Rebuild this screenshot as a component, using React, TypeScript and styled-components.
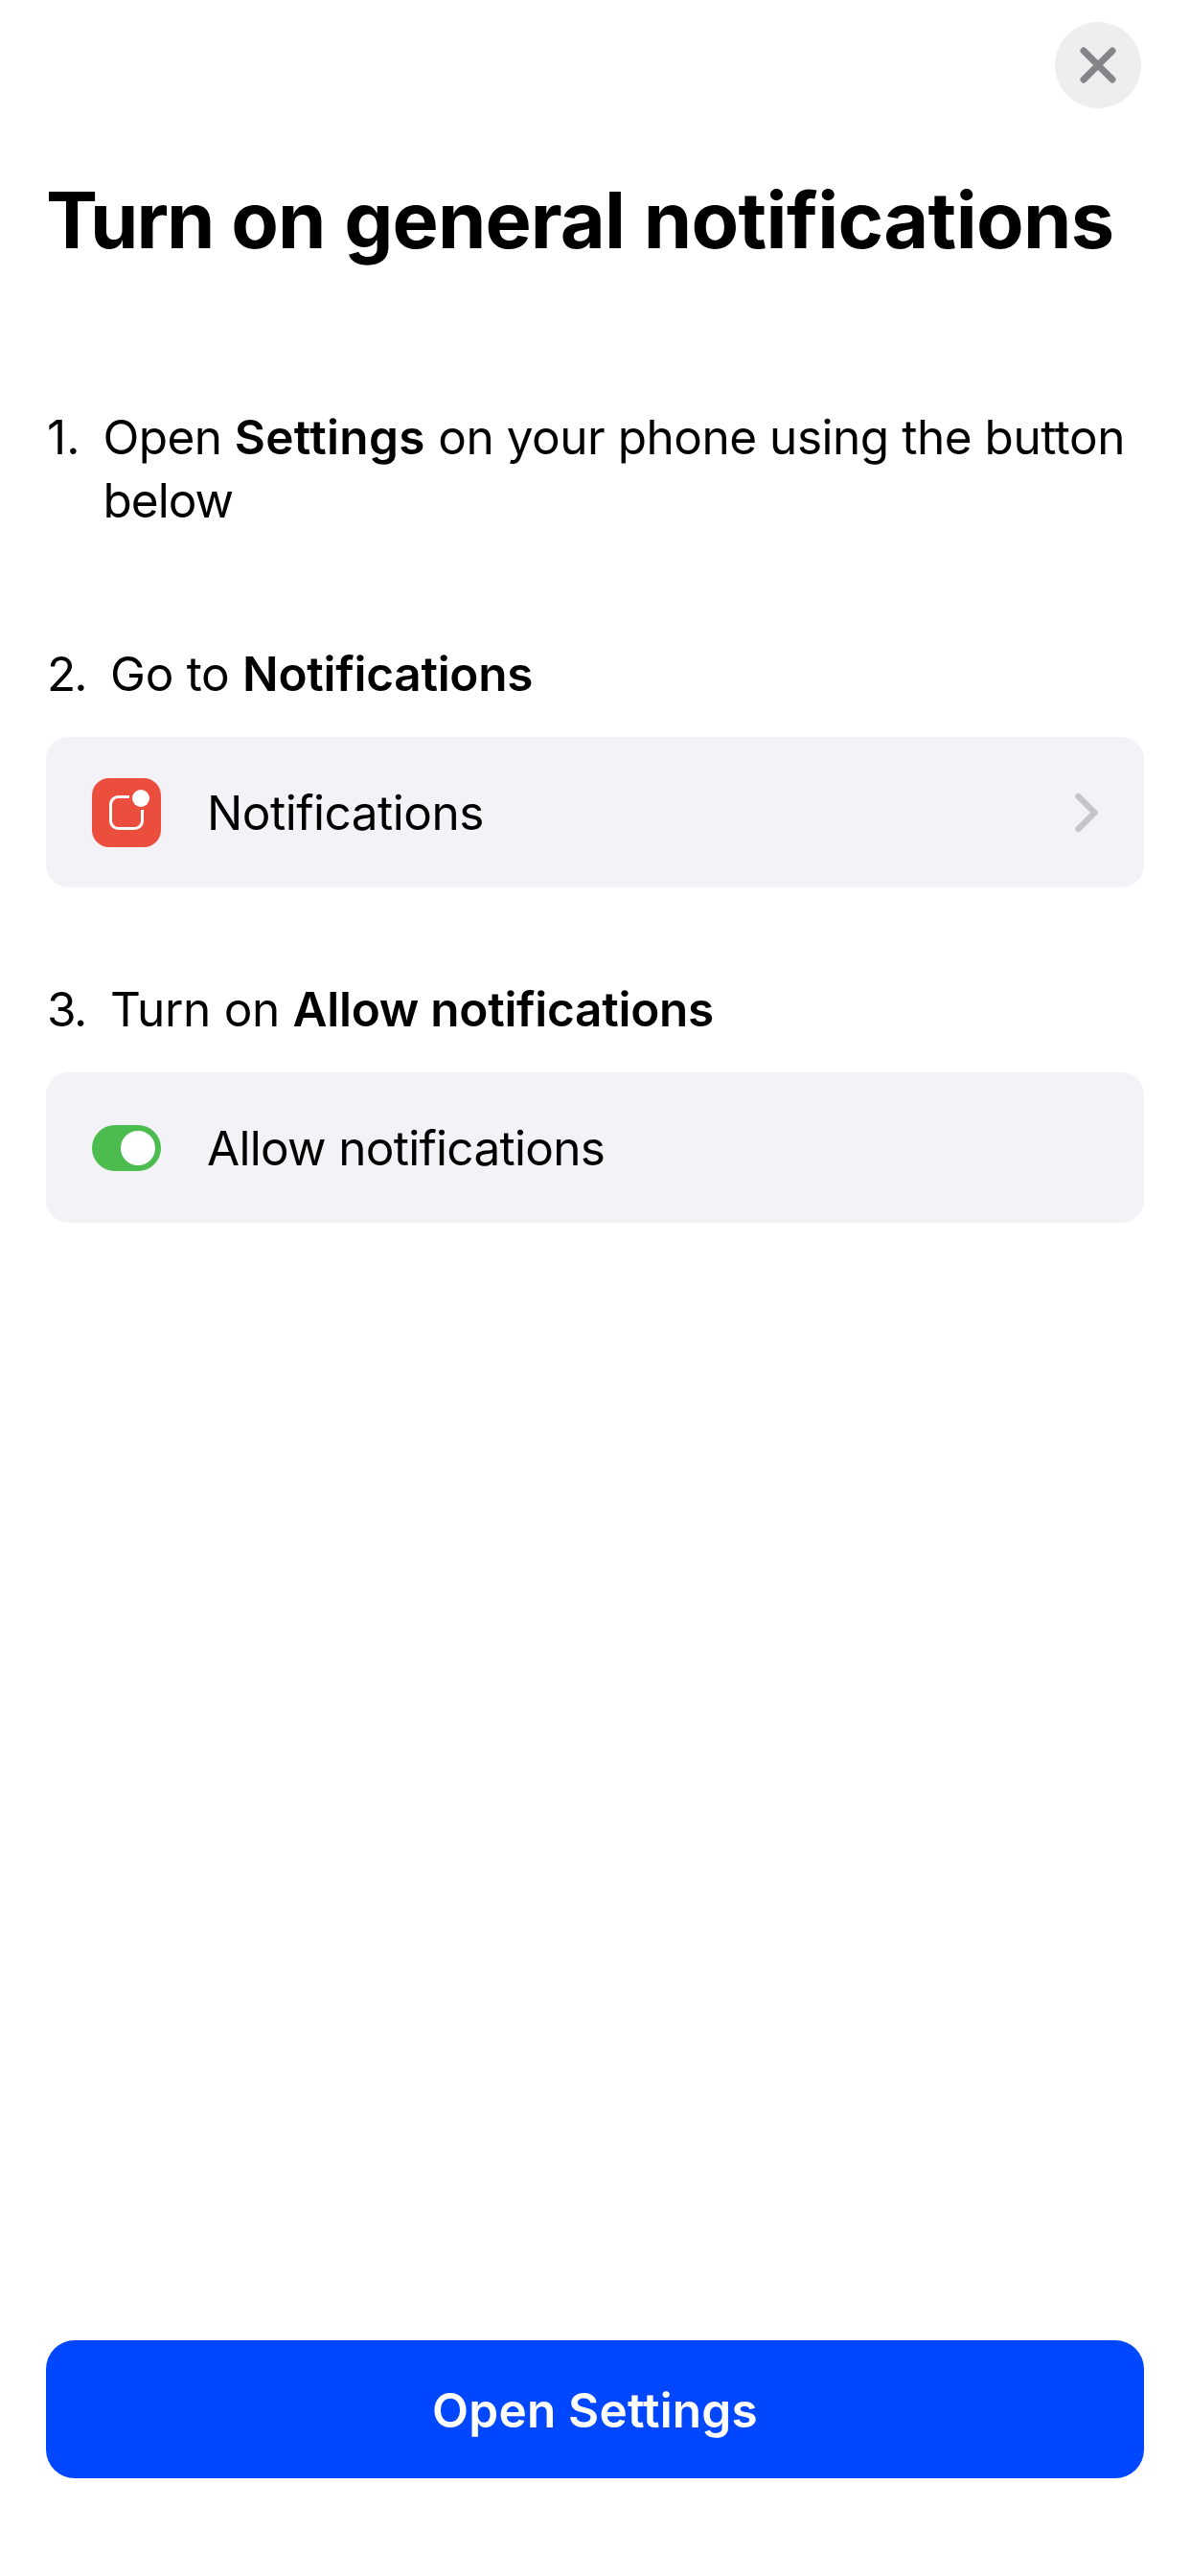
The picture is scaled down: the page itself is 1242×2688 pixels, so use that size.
import React from "react";
import styled, { createGlobalStyle } from "styled-components";

const GlobalStyle = createGlobalStyle`
  *, *::before, *::after { box-sizing: border-box; }
  html, body { margin: 0; padding: 0; background: #ffffff; }
  body { font-family: Inter, "Liberation Sans", sans-serif; color: #000000; }
`;

const Screen = styled.main`
  display: flex;
  flex-direction: column;
  width: 100%;
  min-height: 2688px;
  padding: 23px 48px 102px;
  background: #ffffff;
`;

const Header = styled.header`
  display: flex;
  justify-content: flex-end;
  padding-right: 3px;
`;

const CloseButton = styled.button`
  display: flex;
  align-items: center;
  justify-content: center;
  width: 90px;
  height: 90px;
  padding: 0;
  border: 0;
  border-radius: 50%;
  background: #eeeeee;
`;

const Title = styled.h1`
  margin: 67px 0 0;
  font-size: 81px;
  font-weight: 700;
  line-height: 100px;
  word-spacing: 1.5px;
  white-space: nowrap;
`;

const Steps = styled.ol`
  display: flex;
  flex-direction: column;
  gap: 94px;
  margin: 143px 0 0;
  padding: 0;
  list-style: none;
`;

const Step = styled.li<{ $extraSpace?: number }>`
  display: flex;
  flex-direction: column;
  gap: 33px;
  padding-bottom: ${(p) => p.$extraSpace ?? 0}px;
`;

const StepLine = styled.div<{ $indent: number }>`
  display: grid;
  grid-template-columns: ${(p) => p.$indent}px 1fr;
  font-size: 49.5px;
  line-height: 66px;
`;

const Marker = styled.span<{ $spacing: number }>`
  padding-left: 1px;
  letter-spacing: ${(p) => p.$spacing}px;
`;

const StepText = styled.p`
  margin: 0;
`;

const Run = styled.span<{ $spacing: number }>`
  letter-spacing: ${(p) => p.$spacing}px;
`;

const Strong = styled.strong<{ $spacing: number }>`
  font-weight: 600;
  letter-spacing: ${(p) => p.$spacing}px;
`;

const Card = styled.div`
  display: flex;
  align-items: center;
  height: 157px;
  padding: 0 48px;
  border-radius: 24px;
  background: #f2f2f7;
`;

const CardLabel = styled.span<{ $spacing: number }>`
  flex: 1;
  margin-left: 48px;
  font-size: 49.5px;
  line-height: 66px;
  letter-spacing: ${(p) => p.$spacing}px;
`;

const ToggleTrack = styled.span`
  display: flex;
  align-items: center;
  justify-content: flex-end;
  width: 72px;
  height: 48px;
  padding: 0 6px;
  border-radius: 24px;
  background: #4cbc4f;
`;

const ToggleKnob = styled.span`
  width: 36px;
  height: 36px;
  border-radius: 50%;
  background: #ffffff;
`;

const PrimaryButton = styled.button`
  height: 144px;
  margin-top: auto;
  padding: 2px 0 0;
  border: 0;
  border-radius: 30px;
  background: #0047ff;
  color: #ffffff;
  font-family: inherit;
  font-size: 49.5px;
  font-weight: 600;
  line-height: 66px;
  letter-spacing: 0.2px;
`;

const CloseIcon = () => (
  <svg width="38" height="38" viewBox="0 0 38 38" fill="none">
    <path d="M4 4L34 34M34 4L4 34" stroke="#858489" strokeWidth="7" strokeLinecap="round" />
  </svg>
);

const NotificationsIcon = () => (
  <svg width="72" height="72" viewBox="0 0 72 72" fill="none">
    <rect width="72" height="72" rx="18" fill="#eb4e3d" />
    <path
      d="M39 19.5H27.5a8 8 0 0 0-8 8V44.500a8 8 0 0 0 8 8H44.500a8 8 0 0 0 8-8V33"
      stroke="#ffffff"
      strokeWidth="3"
    />
    <circle cx="51" cy="21" r="9" fill="#ffffff" />
  </svg>
);

const ChevronIcon = () => (
  <svg width="24" height="42" viewBox="0 0 24 42" fill="none">
    <path d="M3.500 4L20.500 21L3.500 38" stroke="#c5c5c7" strokeWidth="6.300" strokeLinecap="round" strokeLinejoin="round" />
  </svg>
);

export default function App() {
  return (
    <>
      <GlobalStyle />
      <Screen>
        <Header>
          <CloseButton aria-label="Close">
            <CloseIcon />
          </CloseButton>
        </Header>
        <Title>
          <Run $spacing={-2}>Turn </Run>
          <Run $spacing={-0.9}>on general </Run>
          <Run $spacing={-0.65}>notifications</Run>
        </Title>
        <Steps>
          <Step $extraSpace={21}>
            <StepLine $indent={59.5}>
              <Marker $spacing={0}>1.</Marker>
              <StepText>
                <Run $spacing={-0.6}>Open </Run>
                <Strong $spacing={0.35}>Settings</Strong>
                <Run $spacing={-0.47}> on your phone using the button</Run>
                <br />
                <Run $spacing={-1}>below</Run>
              </StepText>
            </StepLine>
          </Step>
          <Step>
            <StepLine $indent={67}>
              <Marker $spacing={-2}>2.</Marker>
              <StepText>
                <Run $spacing={-0.3}>Go to </Run>
                <Strong $spacing={-0.25}>Notifications</Strong>
              </StepText>
            </StepLine>
            <Card>
              <NotificationsIcon />
              <CardLabel $spacing={-0.5}>Notifications</CardLabel>
              <ChevronIcon />
            </Card>
          </Step>
          <Step>
            <StepLine $indent={67}>
              <Marker $spacing={-1.5}>3.</Marker>
              <StepText>
                <Run $spacing={-0.3}>Turn on </Run>
                <Strong $spacing={-0.27}>Allow notifications</Strong>
              </StepText>
            </StepLine>
            <Card>
              <ToggleTrack>
                <ToggleKnob />
              </ToggleTrack>
              <CardLabel $spacing={-0.7}>Allow notifications</CardLabel>
            </Card>
          </Step>
        </Steps>
        <PrimaryButton>Open Settings</PrimaryButton>
      </Screen>
    </>
  );
}
